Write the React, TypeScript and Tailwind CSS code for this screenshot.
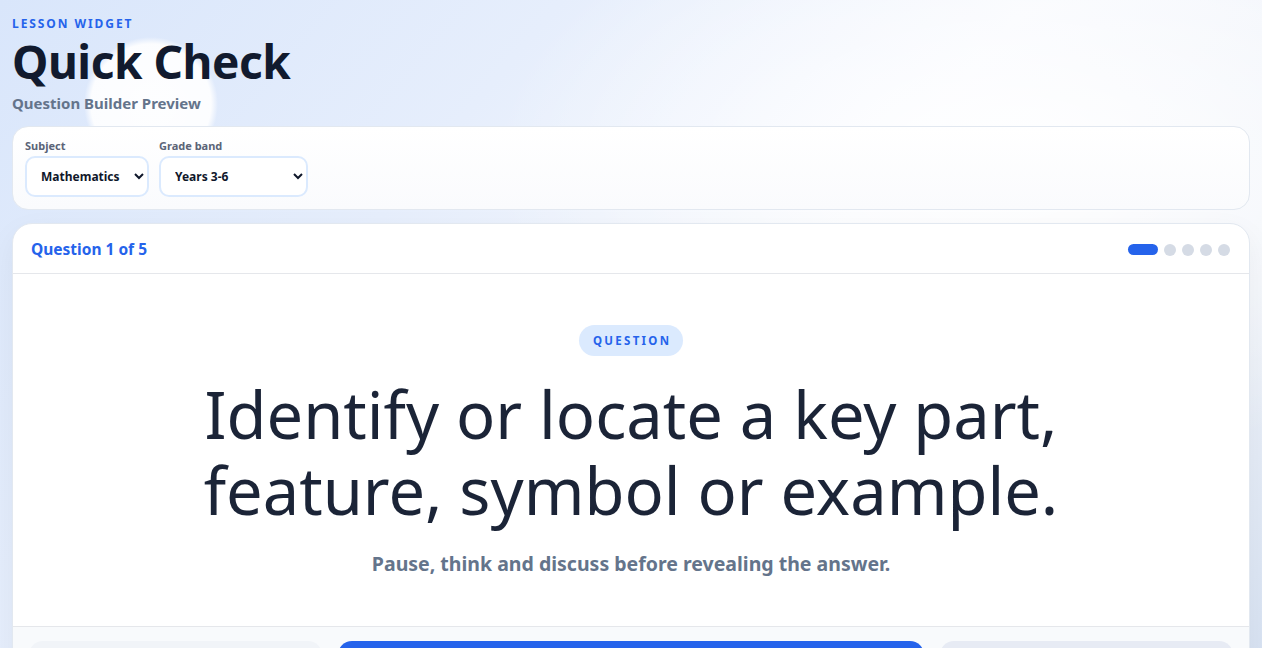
import React, { useState } from 'react';

const subjects = ['Mathematics', 'English', 'Science', 'History'];
const grades = ['Years 3-6', 'Years 7-8', 'Years 9-10'];

export default function App() {
  const [subject, setSubject] = useState('Mathematics');
  const [grade, setGrade] = useState('Years 3-6');
  const current = 0;
  const total = 5;

  return (
    <div
      className="min-h-screen bg-[#eef3fb] bg-[radial-gradient(circle_at_151px_104px,rgba(255,255,255,0.95)_0,rgba(255,255,255,0.9)_60px,rgba(255,255,255,0)_67px),radial-gradient(ellipse_520px_300px_at_1010px_170px,rgba(255,255,255,1)_0,rgba(255,255,255,0)_100%),linear-gradient(130deg,#d9e6fb_0%,#e6eefc_30%,#f7f9fe_55%,#eef2f9_80%,#d3dff1_100%)] px-3 pt-[17px] pb-6 text-[#0f172a]"
      style={{ fontFamily: '"Noto Sans", "Open Sans", sans-serif' }}
    >
      {/* Header */}
      <div>
        <p className="text-[12px] font-bold uppercase leading-[14px] tracking-[0.16em] text-[#2563eb]">
          Lesson Widget
        </p>
        <h1 className="mt-[4px] text-[46px] font-bold leading-[52px] tracking-[-0.01em] text-[#111a2e]">
          Quick Check
        </h1>
        <p className="mt-[6px] text-[15px] font-bold leading-[20px] text-[#64748b]">
          Question Builder Preview
        </p>
      </div>

      {/* Filters */}
      <div className="mt-[13px] rounded-2xl border border-[#e2e8f0] bg-gradient-to-b from-white to-[#fafbfd] px-3 pb-3 pt-3">
        <div className="flex gap-[10px]">
          <label className="flex flex-col gap-[3px]">
            <span className="text-[11px] font-bold leading-[14px] text-[#5b6477]">Subject</span>
            <select
              value={subject}
              onChange={(e) => setSubject(e.target.value)}
              className="h-[41px] w-[124px] rounded-[10px] border-2 border-[#dbeafe] bg-white pl-[10px] pr-[6px] text-[12px] font-bold text-[#0f172a] outline-none"
            >
              {subjects.map((s) => (
                <option key={s}>{s}</option>
              ))}
            </select>
          </label>
          <label className="flex flex-col gap-[3px]">
            <span className="text-[11px] font-bold leading-[14px] text-[#5b6477]">Grade band</span>
            <select
              value={grade}
              onChange={(e) => setGrade(e.target.value)}
              className="h-[41px] w-[149px] rounded-[10px] border-2 border-[#dbeafe] bg-white pl-[10px] pr-[6px] text-[12px] font-bold text-[#0f172a] outline-none"
            >
              {grades.map((g) => (
                <option key={g}>{g}</option>
              ))}
            </select>
          </label>
        </div>
      </div>

      {/* Question card */}
      <div className="mt-[13px] overflow-hidden rounded-[20px] border border-[#e2e8f0] bg-white shadow-[0_10px_30px_rgba(15,23,42,0.05)]">
        <div className="flex h-[50px] items-center justify-between border-b border-[#e5e7eb] pl-[18px] pr-[19px] pt-[2px]">
          <span className="text-[15.5px] font-bold text-[#2563eb]">
            Question {current + 1} of {total}
          </span>
          <div className="flex items-center gap-[6px]">
            {Array.from({ length: total }).map((_, i) =>
              i === current ? (
                <span key={i} className="h-[11px] w-[30px] rounded-full bg-[#2563eb]" />
              ) : (
                <span key={i} className="h-[12px] w-[12px] rounded-full bg-[#d5dbe5]" />
              )
            )}
          </div>
        </div>

        <div className="flex flex-col items-center px-6 pb-[48px] pt-[51px] text-center">
          <span className="flex h-[31px] w-[104px] items-center justify-center rounded-full bg-[#dbeafe] pl-[0.2em] text-[11.5px] font-bold uppercase tracking-[0.2em] text-[#2563eb]">
            Question
          </span>
          <h2 className="mt-5 text-[65px] font-normal leading-[76px] text-[#1b2437]">
            Identify or locate a key part,
            <br />
            feature, symbol or example.
          </h2>
          <p className="mt-[22px] text-[19.5px] font-bold leading-[28px] text-[#64748b]">
            Pause, think and discuss before revealing the answer.
          </p>
        </div>

        <div className="grid grid-cols-[1fr_2fr_1fr] gap-4 border-t border-[#e5e7eb] bg-[#f8fafc] px-4 pb-4 pt-[14px]">
          <button className="h-12 rounded-[14px] bg-[#f1f4f8] text-[15px] font-bold text-[#334155]">
            Previous
          </button>
          <button className="h-12 rounded-[14px] bg-[#2563eb] text-[15px] font-bold text-white">
            Reveal answer
          </button>
          <button className="h-12 rounded-[14px] bg-[#e7ebf4] text-[15px] font-bold text-[#334155]">
            Next
          </button>
        </div>
      </div>
    </div>
  );
}
